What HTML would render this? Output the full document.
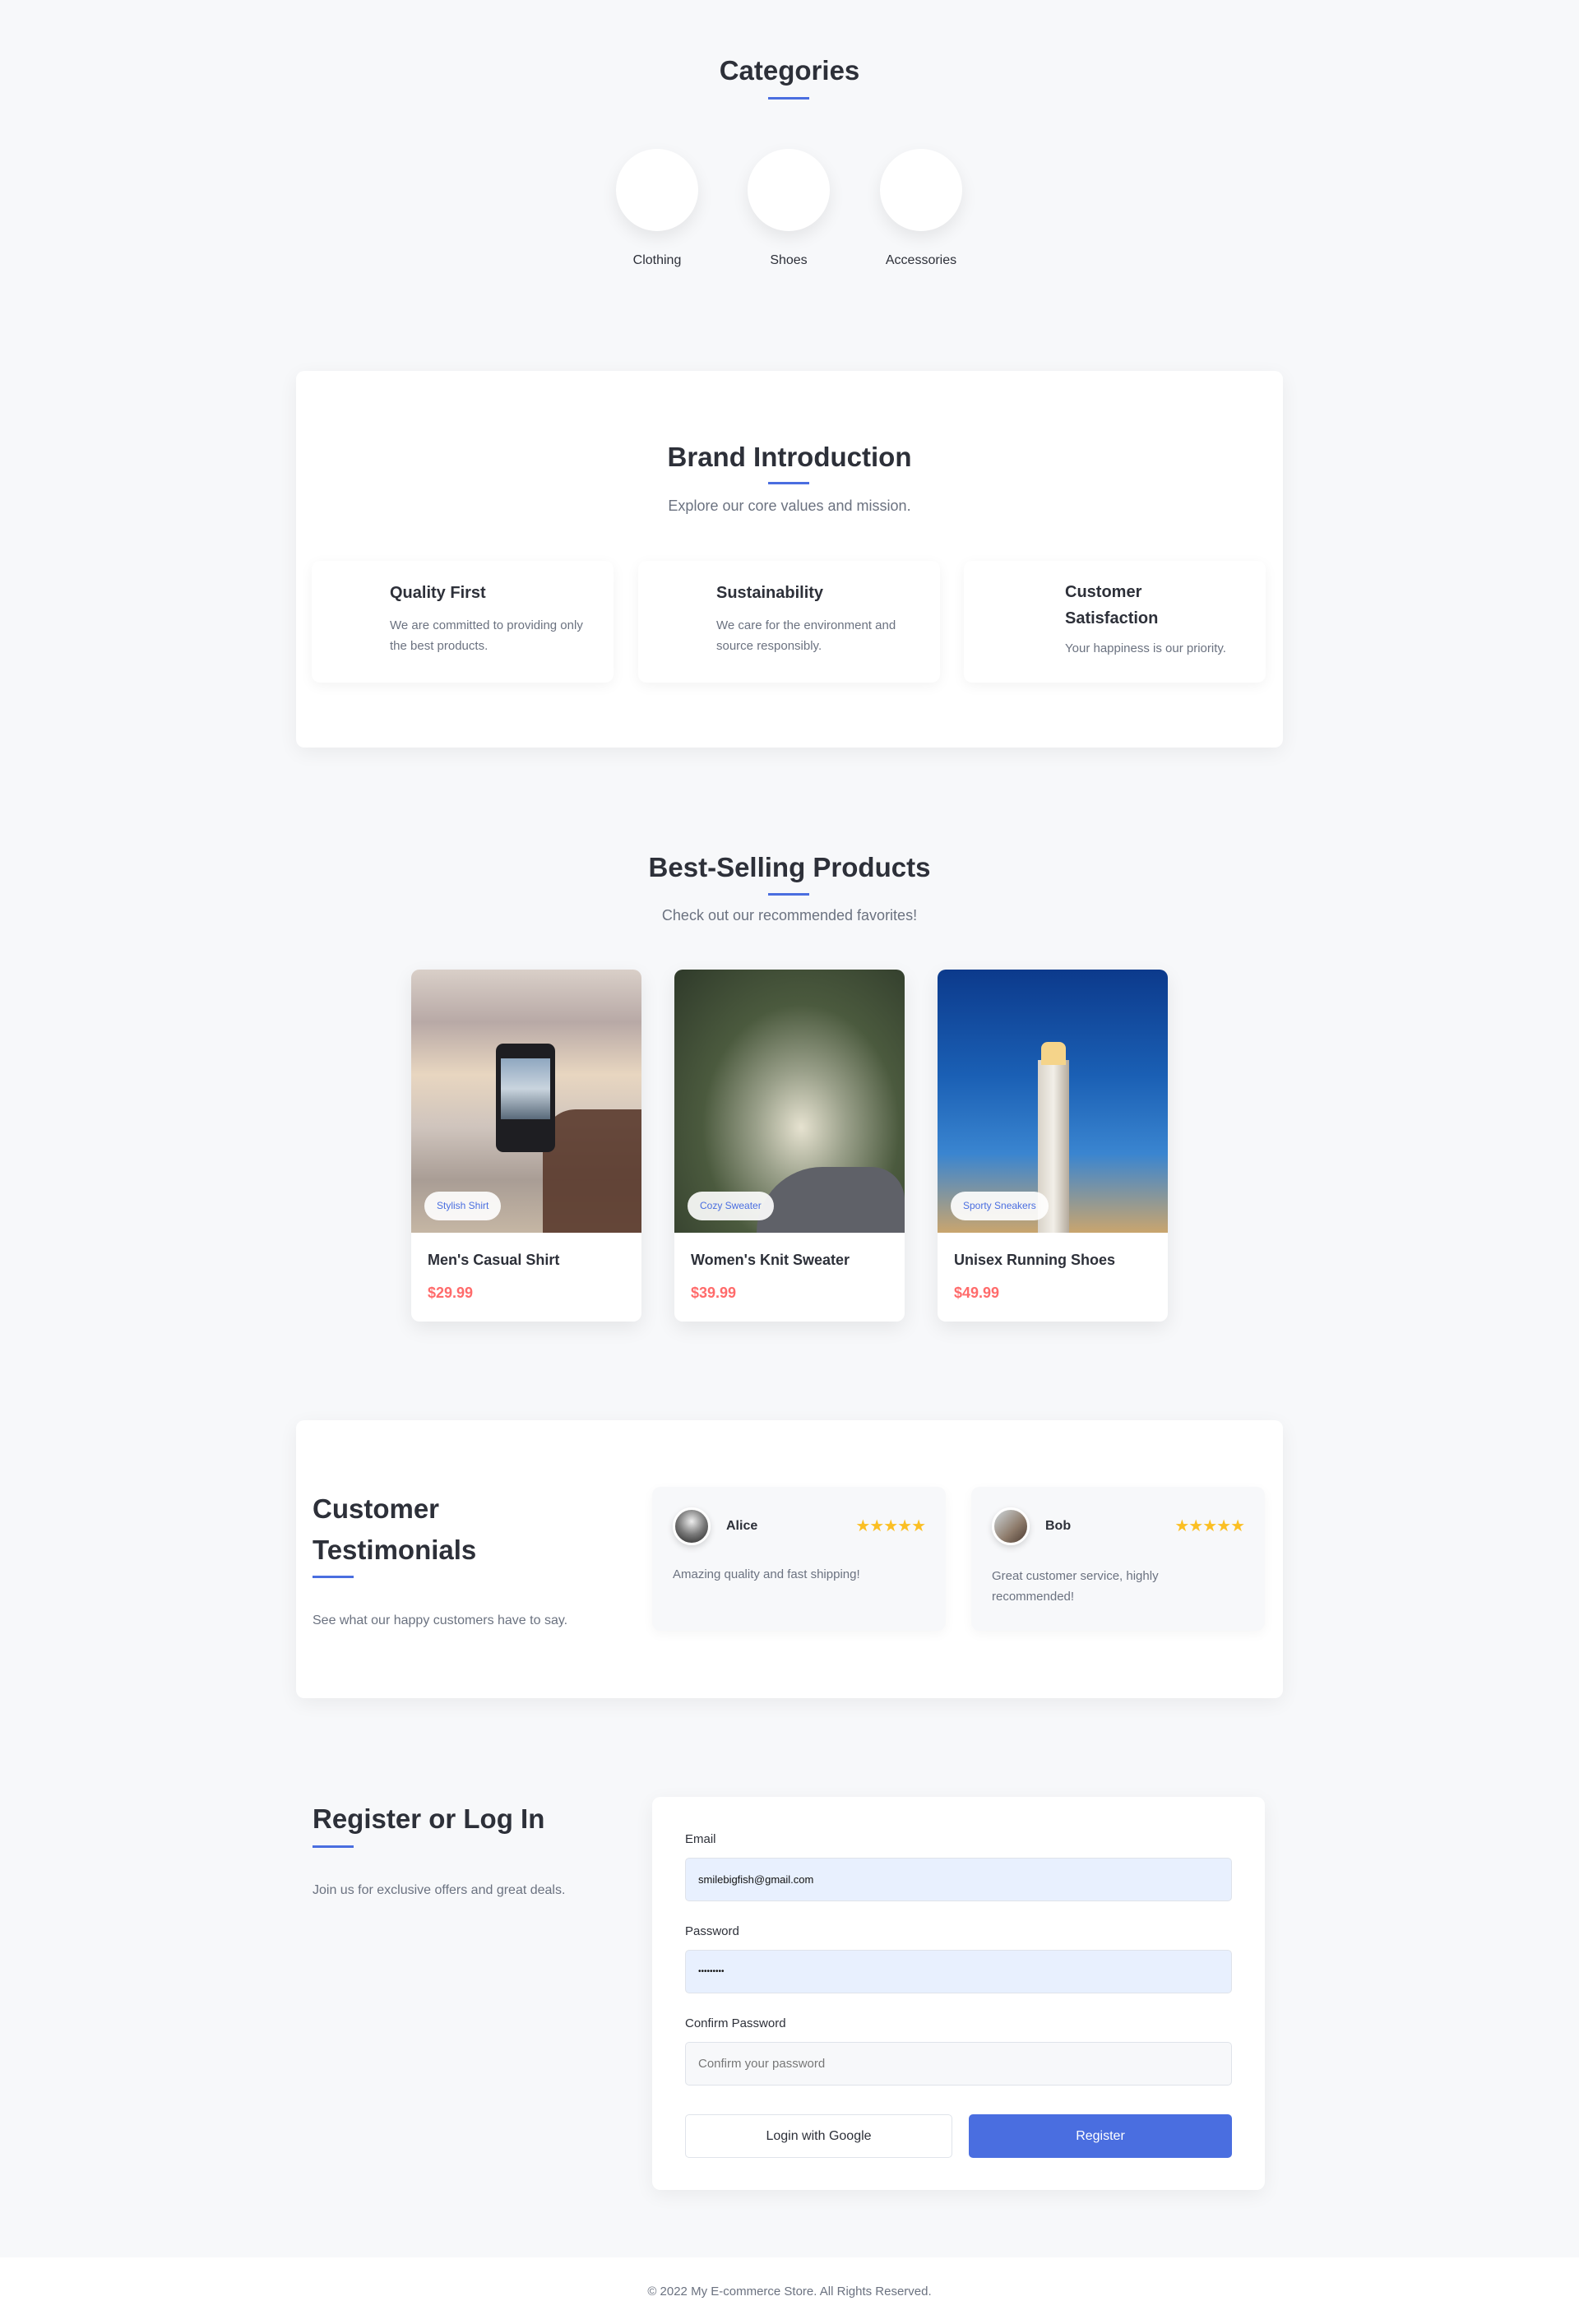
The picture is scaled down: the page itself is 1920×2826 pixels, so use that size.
<!DOCTYPE html>
<html><head><meta charset="utf-8"><style>
*{margin:0;padding:0;box-sizing:border-box}
body{width:1920px;height:2826px;background:#f7f8fa;font-family:"Liberation Sans",sans-serif;color:#2d3039;position:relative;overflow:hidden}
.a{position:absolute}
.h{font-weight:bold;color:#2d3039;white-space:nowrap}
.c{text-align:center}
.ul{position:absolute;height:3px;width:50px;background:#4a6ee0}
.g{color:#6b7280}
.box{position:absolute;background:#fff;border-radius:10px;box-shadow:0 6px 24px rgba(0,0,0,.06)}
.circ{position:absolute;width:100px;height:100px;border-radius:50%;background:#fff;box-shadow:0 8px 20px rgba(0,0,0,.08)}
.fc{position:absolute;background:#fff;border-radius:10px;box-shadow:0 4px 16px rgba(0,0,0,.05);top:682px;height:148px;width:367px}
.pc{position:absolute;top:1179px;width:280px;height:428px;background:#fff;border-radius:10px;overflow:hidden;box-shadow:0 8px 24px rgba(0,0,0,.08)}
.img{height:320px;position:relative}
.badge{position:absolute;left:16px;top:270px;height:35px;padding:0 15px;border-radius:18px;background:rgba(255,255,255,.9);color:#4a6ee0;font-size:12px;line-height:35px}
.pn{position:absolute;left:20px;top:343px;font-size:18px;font-weight:bold}
.pr{position:absolute;left:20px;top:383px;font-size:18px;font-weight:bold;color:#ff6b6b}
.tc{position:absolute;top:1808px;width:357px;height:175px;background:#f7f8fa;border-radius:10px;box-shadow:0 4px 14px rgba(0,0,0,.04)}
.av{position:absolute;left:25px;top:25px;width:46px;height:46px;border-radius:50%;border:3px solid #fff;box-shadow:0 3px 8px rgba(0,0,0,.15)}
.st{position:absolute;right:25px;top:35px;color:#fbbf24;font-size:20px;letter-spacing:-1px}
.lbl{position:absolute;left:40px;font-size:15px;color:#2d3039}
.inp{position:absolute;left:40px;width:665px;height:53px;border:1px solid #dfe3ea;border-radius:5px;padding-left:15px;line-height:51px;font-size:13px}
</style></head><body>
<div class="a h c" style="left:0;width:1920px;top:67px;font-size:33px">Categories</div>
<div class="ul" style="left:934px;top:118px"></div>
<div class="circ" style="left:749px;top:181px"></div>
<div class="circ" style="left:909px;top:181px"></div>
<div class="circ" style="left:1070px;top:181px"></div>
<div class="a c" style="left:719px;width:160px;top:308px;font-size:16px">Clothing</div>
<div class="a c" style="left:879px;width:160px;top:308px;font-size:16px">Shoes</div>
<div class="a c" style="left:1040px;width:160px;top:308px;font-size:16px">Accessories</div>

<div class="box" style="left:360px;top:451px;width:1200px;height:458px"></div>
<div class="a h c" style="left:360px;width:1200px;top:537px;font-size:33px">Brand Introduction</div>
<div class="ul" style="left:934px;top:586px"></div>
<div class="a g c" style="left:360px;width:1200px;top:605px;font-size:18px">Explore our core values and mission.</div>
<div class="fc" style="left:379px"><div class="a h" style="left:95px;top:28px;font-size:20px">Quality First</div><div class="a g" style="left:95px;top:66px;font-size:15px;line-height:25px;width:240px">We are committed to providing only the best products.</div></div>
<div class="fc" style="left:776px"><div class="a h" style="left:95px;top:28px;font-size:20px">Sustainability</div><div class="a g" style="left:95px;top:66px;font-size:15px;line-height:25px;width:225px">We care for the environment and source responsibly.</div></div>
<div class="fc" style="left:1172px"><div class="a h" style="left:123px;top:22px;font-size:20px;line-height:32px;white-space:normal;width:150px">Customer Satisfaction</div><div class="a g" style="left:123px;top:98px;font-size:15px;white-space:nowrap">Your happiness is our priority.</div></div>

<div class="a h c" style="left:0;width:1920px;top:1036px;font-size:33px">Best-Selling Products</div>
<div class="ul" style="left:934px;top:1086px"></div>
<div class="a g c" style="left:0;width:1920px;top:1103px;font-size:18px">Check out our recommended favorites!</div>

<div class="pc" style="left:500px"><div class="img" style="background:linear-gradient(180deg,#d9cfc8 0%,#b8a9a6 20%,#e8d6c0 40%,#cfc4bd 60%,#a99d95 80%,#c5b6a4 100%)">
<div class="a" style="left:160px;top:170px;width:120px;height:150px;background:#5a3a2c;border-radius:40px 0 0 0;opacity:.9"></div>
<div class="a" style="left:103px;top:90px;width:72px;height:132px;background:#1e1e22;border-radius:9px"><div class="a" style="left:6px;top:18px;width:60px;height:74px;background:linear-gradient(#8fa7c0,#c9d4de 50%,#596a7a)"></div></div>
<div class="badge">Stylish Shirt</div></div><div class="pn">Men's Casual Shirt</div><div class="pr">$29.99</div></div>

<div class="pc" style="left:820px"><div class="img" style="background:radial-gradient(ellipse at 55% 60%,#e6e2d0 0%,#9aa08a 25%,#4b5a3e 55%,#2f3a2a 100%)">
<div class="a" style="left:100px;top:240px;width:180px;height:80px;background:#5f6168;border-radius:80px 40px 0 0"></div>
<div class="badge">Cozy Sweater</div></div><div class="pn">Women's Knit Sweater</div><div class="pr">$39.99</div></div>

<div class="pc" style="left:1140px"><div class="img" style="background:linear-gradient(180deg,#0c3a8c 0%,#1a5fb4 40%,#3a85d0 70%,#c9a56e 100%)">
<div class="a" style="left:122px;top:110px;width:38px;height:210px;background:linear-gradient(90deg,#d8d2c8,#f2efe8,#b4aa9c)"></div>
<div class="a" style="left:126px;top:88px;width:30px;height:28px;background:#f5d48a;border-radius:8px 8px 0 0"></div>
<div class="badge">Sporty Sneakers</div></div><div class="pn">Unisex Running Shoes</div><div class="pr">$49.99</div></div>

<div class="box" style="left:360px;top:1727px;width:1200px;height:338px"></div>
<div class="a h" style="left:380px;top:1810px;font-size:33px;line-height:50px">Customer<br>Testimonials</div>
<div class="ul" style="left:380px;top:1916px"></div>
<div class="a g" style="left:380px;top:1962px;font-size:16px">See what our happy customers have to say.</div>
<div class="tc" style="left:793px"><div class="av" style="background:radial-gradient(circle at 50% 35%,#eee,#777 50%,#222)"></div><div class="a h" style="left:90px;top:39px;font-size:16px">Alice</div><div class="st">★★★★★</div><div class="a g" style="left:25px;top:98px;font-size:15px">Amazing quality and fast shipping!</div></div>
<div class="tc" style="left:1181px"><div class="av" style="background:linear-gradient(135deg,#cfd8dc,#8d7a6a 60%,#4a3a30)"></div><div class="a h" style="left:90px;top:39px;font-size:16px">Bob</div><div class="st">★★★★★</div><div class="a g" style="left:25px;top:96px;font-size:15px;line-height:25px;width:260px">Great customer service, highly recommended!</div></div>

<div class="a h" style="left:380px;top:2193px;font-size:33px">Register or Log In</div>
<div class="ul" style="left:380px;top:2244px"></div>
<div class="a g" style="left:380px;top:2290px;font-size:16px">Join us for exclusive offers and great deals.</div>
<div class="box" style="left:793px;top:2185px;width:745px;height:478px">
<div class="lbl" style="top:43px">Email</div>
<div class="inp" style="top:74px;background:#e8f0fe;color:#111">smilebigfish@gmail.com</div>
<div class="lbl" style="top:155px">Password</div>
<div class="inp" style="top:186px;background:#e8f0fe;color:#111;font-size:10px;letter-spacing:0">•••••••••</div>
<div class="lbl" style="top:267px">Confirm Password</div>
<div class="inp" style="top:298px;background:#f7f8fa;color:#777;font-size:15px">Confirm your password</div>
<div class="a c" style="left:40px;top:386px;width:325px;height:53px;border:1px solid #dfe3ea;border-radius:5px;line-height:51px;font-size:16px;background:#fff">Login with Google</div>
<div class="a c" style="left:385px;top:386px;width:320px;height:53px;border-radius:5px;line-height:53px;font-size:16px;background:#4a6ee0;color:#fff">Register</div>
</div>
<div class="a" style="left:0;top:2745px;width:1920px;height:81px;background:#fff"></div>
<div class="a g c" style="left:0;width:1920px;top:2778px;font-size:15px">© 2022 My E-commerce Store. All Rights Reserved.</div>
</body></html>
